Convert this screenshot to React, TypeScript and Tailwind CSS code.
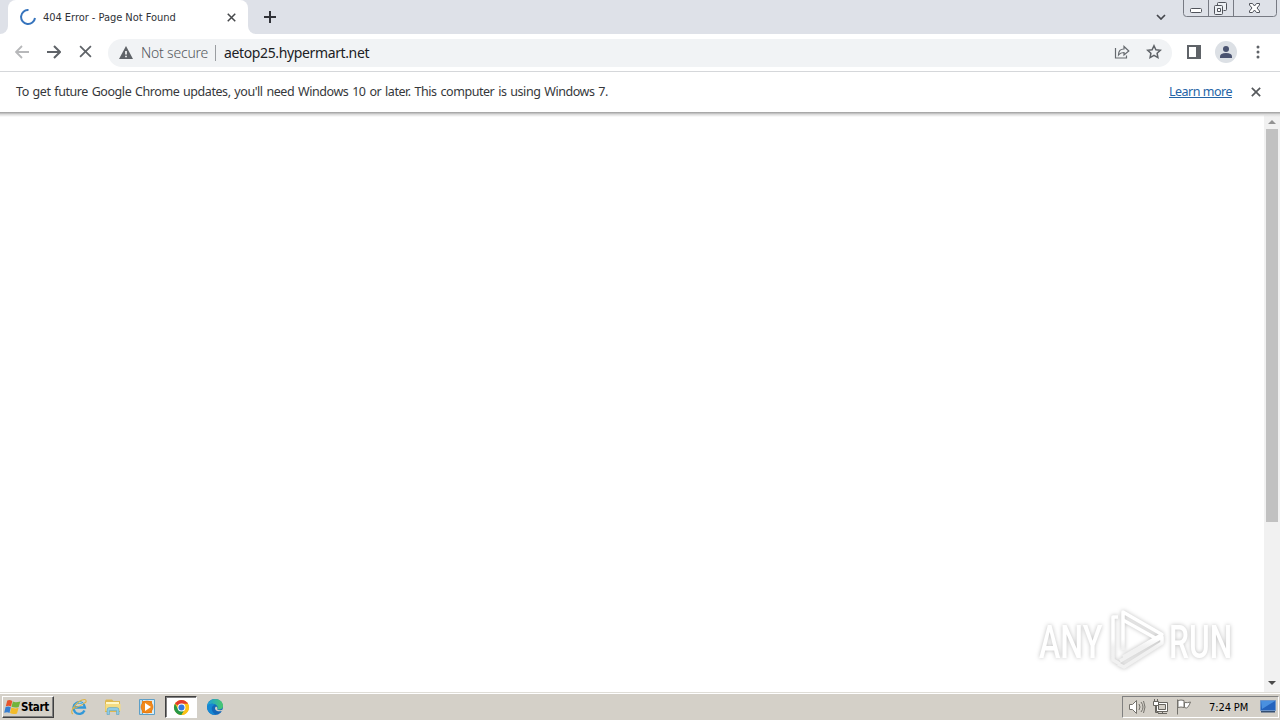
import type { ReactNode } from "react";

const quickLaunch: { id: string; icon: ReactNode; active?: boolean }[] = [
  { id: "ie", icon: <ExplorerIcon /> },
  { id: "files", icon: <FolderIcon /> },
  { id: "player", icon: <PlayerIcon /> },
  { id: "chrome", icon: <ChromeIcon />, active: true },
  { id: "edge", icon: <EdgeIcon /> },
];

function CloseIcon({ className }: { className: string }) {
  return (
    <svg viewBox="0 0 12 12" className={className} fill="none" stroke="currentColor">
      <path d="M1 1l10 10M11 1L1 11" />
    </svg>
  );
}

function ExplorerIcon() {
  return (
    <svg viewBox="0 0 18 18" className="size-[18px]" fill="none">
      <path d="M14.500 12.500A5.800 5.800 0 1 1 15 9.500H5" stroke="#3298d8" strokeWidth="2.300" />
      <path d="M5 7A5 5 0 0 1 13 6" stroke="#9edcf5" strokeWidth="1" />
      <path d="M3 16C-1 15 5 5 12 2c4-1.500 5 .5 3.500 3M2 11C5 10 12 8 15.500 4" stroke="#ddb344" strokeWidth="1.100" />
    </svg>
  );
}

function FolderIcon() {
  return (
    <svg viewBox="0 0 18 18" className="size-[18px]">
      <path d="M1 3l1-1.500h6L9.500 3H16v11H1z" fill="#dfb951" />
      <path d="M2 4h13v3H2z" fill="#fff7c7" />
      <path d="M1.500 6h15v7h-15z" fill="#f4dc83" />
      <path d="M3 16.500V12q0-2.500 2.500-2.500h7q2.500 0 2.500 2.500v4.500h-2.500v-4h-7v4z" fill="#8fcbe4" stroke="#4e9bbf" strokeWidth=".5" />
    </svg>
  );
}

function PlayerIcon() {
  return (
    <svg viewBox="0 0 18 18" className="size-[18px]">
      <path d="M1.500 1.500h12v15h-12z" fill="#b9dced" stroke="#5d9fc7" />
      <path d="M4.500 1.500h12v15h-12z" fill="#d8edf6" stroke="#5d9fc7" />
      <path d="M4 3h10v12H4z" fill="#f28a1b" />
      <circle cx="9" cy="9" r="6" fill="#f28a1b" stroke="#d66c10" strokeWidth=".6" />
      <path d="M7 5v8l6-4z" fill="#fff" />
    </svg>
  );
}

function ChromeIcon() {
  return (
    <svg viewBox="0 0 18 18" className="size-[17px]">
      <circle cx="9" cy="9" r="8" fill="#fbc116" />
      <path d="M9 9L2.100 5A8 8 0 0 1 15.900 5z" fill="#e33b2e" />
      <path d="M2.100 5A8 8 0 0 0 9 17l3.500-6H5.600z" fill="#279847" />
      <path d="M9 5h6.900A8 8 0 0 1 9 17l3.500-6z" fill="#fbc116" />
      <circle cx="9" cy="9" r="4.200" fill="#fff" />
      <circle cx="9" cy="9" r="3.200" fill="#3478df" />
    </svg>
  );
}

function EdgeIcon() {
  return (
    <svg viewBox="0 0 18 18" className="size-[18px]">
      <defs>
        <linearGradient id="edgeTop" x1="0" x2="1">
          <stop stopColor="#1a9ee0" />
          <stop offset="1" stopColor="#4ac96b" />
        </linearGradient>
      </defs>
      <circle cx="9" cy="9" r="8" fill="#1367b8" />
      <path d="M1 8.500C1.500 4 5 1 9 1c5 0 8 3 8 7 0 3-3 4-6 3 .8-.8.9-2 .2-3C9 5 3.500 5 1 8.500z" fill="url(#edgeTop)" />
      <path d="M10 8.500c-2.500 2 0 6 5.700 4.500L18 12v-1c-2 1.500-5 1.500-7 .2.700-.7.500-2-1-2.700z" fill="#d4d0c8" />
      <path d="M1 9c1-4 6-4 8-2-5 1-4 7 1 10-5 0-9-3-9-8z" fill="#1688d3" />
    </svg>
  );
}

function WindowsFlag() {
  return (
    <svg viewBox="0 0 17 16" className="h-4 w-[17px] shrink-0">
      <path d="M3.300 1.500C5 .5 6.500 1 8.300 2L7 7.500C5.200 6.500 4 6.500 1.800 7.300z" fill="#e7542b" />
      <path d="M8.900 2.500c2 1.300 4.500.8 7.500 0L14.700 8c-2 .9-5 .8-7.200-.2z" fill="#71b43b" />
      <path d="M1.600 8.100c2-.9 3.500-.8 5.200.2L5.500 14C4 13 2.500 13 .2 13.800z" fill="#367ed1" />
      <path d="M7.400 8.600c2 1 5 1 7.200.2L13 14.500c-2.500.9-5 .7-7-.5z" fill="#f3bb29" />
    </svg>
  );
}

function TabStrip() {
  return (
    <div className="flex h-[34px] items-start bg-[#dee1e8]">
      <div className="flex h-[34px] w-2 items-end bg-white">
        <div className="h-full w-full rounded-br-lg bg-[#dee1e8]" />
      </div>
      <div className="bg-[#dee1e8]">
        <div className="flex h-[34px] w-60 items-center rounded-t-lg bg-white pl-3">
          <svg viewBox="0 0 16 16" className="size-4 shrink-0" fill="none" stroke="#3674bd" strokeWidth="2">
            <path d="M8.500 1A7 7 0 1 0 15 9" />
          </svg>
          <span className="ml-[7px] w-[184px] whitespace-nowrap pt-0.5 font-['DejaVu_Sans_Condensed','DejaVu_Sans',sans-serif] text-[11px] tracking-[-0.040px] text-[#303238]">
            404 Error - Page Not Found
          </span>
          <CloseIcon className="size-[9px] shrink-0 stroke-[2] text-[#45474a]" />
        </div>
      </div>
      <div className="h-[34px] w-2 bg-white">
        <div className="h-full rounded-bl-lg bg-[#dee1e8]" />
      </div>
      <svg viewBox="0 0 12 12" className="ml-2 mt-[11px] size-3" stroke="#303238" strokeWidth="2">
        <path d="M6 0v12M0 6h12" />
      </svg>
      <svg viewBox="0 0 10 6" className="ml-auto mr-[17px] mt-[14px] h-1.5 w-2.5" fill="none" stroke="#45474d" strokeWidth="1.700">
        <path d="M1 1l4 4 4-4" />
      </svg>
      <svg viewBox="0 0 94 17" className="mr-[3px] h-[17px] w-[94px]" fill="none" stroke="#777a83">
        <path d="M.5 0v13.500q0 3 3 3h87q3 0 3-3V0M25.500 0v16M50.500 0v16" />
        <rect x="7.500" y="8.500" width="11" height="4" rx="1" fill="#fff" stroke="#50535b" />
        <g stroke="#50535b">
          <path d="M34.500 5V3.500q0-1 1-1h7q1 0 1 1v6q0 1-1 1h-2" fill="#edf0f4" />
          <rect x="31.500" y="5.500" width="8" height="9" rx="1" fill="#edf0f4" />
          <path d="M34.500 8.500h3v3h-3z" fill="#fff" />
          <path d="M66.500 3.500h3l2 2.500 2-2.500h3v1.500L74 8l2.500 3v1.500h-3l-2-2.500-2 2.500h-3V11L69 8l-2.500-3z" fill="#fff" />
        </g>
      </svg>
    </div>
  );
}

function Toolbar() {
  return (
    <div className="flex h-[38px] items-center border-b border-[#d5d7da] bg-white pl-[15px] text-[#5f6368]">
      <svg viewBox="0 0 14 14" className="mb-0.5 size-[14px] text-[#b7b8ba]" fill="none" stroke="currentColor" strokeWidth="1.800">
        <path d="M14 7H1M7 1L1 7l6 6" />
      </svg>
      <svg viewBox="0 0 14 14" className="mb-0.5 ml-[18px] size-[14px]" fill="none" stroke="currentColor" strokeWidth="2">
        <path d="M0 7h13M7 1l6 6-6 6" />
      </svg>
      <CloseIcon className="mb-0.5 ml-[18px] size-[13px] stroke-[1.6]" />
      <div className="ml-4 flex h-7 w-[1064px] items-center rounded-full bg-[#f1f3f5] pl-[11px]">
        <svg viewBox="0 0 14 13" className="mb-px h-[13px] w-[14px]">
          <path d="M7 0l7 13H0z" fill="#5f6368" />
          <path d="M6.200 5h1.600v3.500H6.200zM6.200 9.700h1.600v1.500H6.200z" fill="#fff" />
        </svg>
        <span className="ml-2 w-[75px] whitespace-nowrap border-r border-[#9a9da1] font-['Noto_Sans',sans-serif] text-[14px] leading-4 font-light tracking-[-0.200px] text-[#55585d]">
          Not secure
        </span>
        <span className="ml-2 whitespace-nowrap font-['Noto_Sans',sans-serif] text-[14px] leading-4 tracking-[-0.370px] text-[#202124]">
          aetop25.hypermart.net
        </span>
        <svg viewBox="0 0 16 14" className="mb-0.5 ml-auto h-[14px] w-4" fill="none" stroke="#666a6f" strokeWidth="1.200">
          <path d="M1.500 3v10h11V10.500M4.500 10c0-4 2-6 5.500-6V1.500L14.800 6 10 10V7.500c-2.500 0-4 .5-5.500 2.500z" />
        </svg>
        <svg viewBox="0 0 16 16" className="mb-0.5 ml-4 mr-2.5 size-4" fill="none" stroke="#5f6368" strokeWidth="1.500">
          <path d="M8 1.700l1.900 4 4.400.5-3.200 3 .8 4.400L8 11.400l-3.900 2.200.8-4.400-3.200-3 4.400-.5z" />
        </svg>
      </div>
      <svg viewBox="0 0 14 14" className="mb-0.5 ml-[15px] size-[14px]">
        <path fill="#5f6368" fillRule="evenodd" d="M0 0h14v14H0zM2 2v10h7V2z" />
      </svg>
      <svg viewBox="0 0 22 22" className="mb-0.5 ml-[14px] size-[22px]">
        <circle cx="11" cy="11" r="11" fill="#dce0e5" />
        <circle cx="11" cy="8" r="3" fill="#4a5370" />
        <path d="M5 17v-1.500q0-3.500 6-3.500t6 3.500V17z" fill="#4a5370" />
      </svg>
      <svg viewBox="0 0 4 14" className="mb-0.5 ml-[19px] h-[14px] w-1" fill="#5f6368">
        <circle cx="2" cy="2" r="1.500" />
        <circle cx="2" cy="7" r="1.500" />
        <circle cx="2" cy="12" r="1.500" />
      </svg>
    </div>
  );
}

function UpdateBar() {
  return (
    <div className="flex h-[41px] items-center bg-white pl-4 font-['Noto_Sans',sans-serif] text-[12.500px] leading-4">
      <span className="whitespace-nowrap pb-px tracking-[-0.440px] text-[#36383b] [word-spacing:1px]">
        To get future Google Chrome updates, you'll need Windows 10 or later. This computer is using Windows 7.
      </span>
      <a className="mb-px ml-auto w-[63px] whitespace-nowrap tracking-[-0.500px] text-[#2464a6] underline">Learn more</a>
      <CloseIcon className="mb-px ml-[19px] mr-[19px] size-[10px] stroke-[2] text-[#56595c]" />
    </div>
  );
}

// Pale logo in the lower right corner of the page
function Watermark() {
  return (
    <svg
      viewBox="0 0 210 64"
      className="absolute bottom-[19px] right-[32px] h-16 w-[210px] overflow-visible drop-shadow-[0_0_2px_rgba(0,0,0,0.26)]"
      fill="none"
      stroke="url(#markFill)"
    >
      <defs>
        <linearGradient id="markFill" gradientUnits="userSpaceOnUse" x1="0" y1="30" x2="0" y2="38">
          <stop stopColor="#ffffff" />
          <stop offset="1" stopColor="#f1f1f1" />
        </linearGradient>
      </defs>
      <g fill="url(#markFill)" stroke="none" fontFamily="Roboto, sans-serif" fontSize="46" fontWeight="500">
        <text transform="translate(1 49) scale(.7 1)">ANY</text>
        <text transform="translate(131 49) scale(.69 1)">RUN</text>
      </g>
      <g strokeWidth="3.500" strokeLinejoin="round">
        <path d="M85 41V3l39 22.500L85 48M80 8h-5v43l7 4" />
        <path d="M85 11l34 19M82 52l42-24v6L86 58l-6-3" />
      </g>
    </svg>
  );
}

function PageView() {
  return (
    <div className="relative flex h-[579px] justify-end bg-white">
      <div className="flex w-4 flex-col items-center bg-[#f1f1f1]">
        <svg viewBox="0 0 16 16" className="size-4" fill="#929292">
          <path d="M4 11h8L8 7z" />
        </svg>
        <div className="h-[393px] w-3 bg-[#c1c1c1]" />
        <svg viewBox="0 0 16 17" className="mt-auto h-[17px] w-4" fill="#4b4b4b">
          <path d="M4 6h8l-4 4z" />
        </svg>
      </div>
      <div className="absolute inset-x-0 -top-px h-[5px] bg-linear-to-b from-[#9c9c9c] via-[#dcdcdc] to-transparent" />
      <Watermark />
    </div>
  );
}

function Taskbar() {
  return (
    <div className="flex h-7 items-start border-t border-[#dfddd7] bg-[#d4d0c8] shadow-[inset_0_1px_white]">
      <button className="ml-0.5 mt-[3px] flex h-[22px] w-[52px] items-center border border-t-white border-r-[#404040] border-b-[#404040] border-l-white pl-px shadow-[inset_-1px_-1px_#808080] font-['DejaVu_Sans_Condensed','DejaVu_Sans',sans-serif] text-[11.500px] font-bold tracking-[-0.280px] text-black">
        <WindowsFlag />
        <span className="pt-0.5">Start</span>
      </button>
      <div className="ml-2 mt-[3px] flex">
        {quickLaunch.map((item) => (
          <div
            key={item.id}
            className={
              item.active
                ? "mx-px flex h-[22px] w-8 items-center justify-center border border-t-[#404040] border-r-white border-b-white border-l-[#404040] bg-white shadow-[inset_1px_1px_#808080]"
                : "flex h-[22px] w-[34px] items-center justify-center"
            }
          >
            {item.icon}
          </div>
        ))}
      </div>
      <div className="ml-auto mr-px mt-[3px] flex h-[22px] w-[157px] items-center border border-t-[#808080] border-r-white border-b-white border-l-[#808080] pl-[5px]">
        <svg viewBox="0 0 18 16" className="h-4 w-[18px]" fill="none" stroke="#74726c">
          <path d="M1.500 5.500h3l4-4v13l-4-4h-3z" fill="#fff" />
          <path d="M11 5q2 3 0 6M13 3q4 5 0 10M15.500 2q3 6 0 12" />
        </svg>
        <svg viewBox="0 0 17 16" className="ml-[6px] h-4 w-[17px]" fill="none" stroke="#67655f">
          <path d="M4.500 3.500h11v9h-11z" fill="#fff" />
          <path d="M6.500 5.500h7v5h-7z" fill="#d4d0c8" />
          <path d="M10.500 13v1.500M6 14.500h9" />
          <path d="M1.500 2.500h5v4h-5zM2.500 0v2.500M5.500 0v2.500" fill="#fff" />
          <path d="M3.500 7v6.500h3" />
        </svg>
        <svg viewBox="0 0 16 16" className="ml-[7px] size-4" fill="#fff" stroke="#74726c">
          <path d="M1.500 .5v15M2 1.500q3-1 6 0v7q-3-1-6 0zM8.500 3.500q3 .5 6-.5-1 3-3 5.500-1 1-3 0z" />
        </svg>
        <span className="ml-[17px] w-[41px] whitespace-nowrap pt-0.5 font-['DejaVu_Sans_Condensed','DejaVu_Sans',sans-serif] text-[11px] tracking-[-0.100px] text-black">
          7:24 PM
        </span>
        <svg viewBox="0 0 16 14" className="ml-auto mr-[2px] h-[14px] w-4 shrink-0">
          <path d="M.5 .5h15v10H.5z" fill="#2463bd" stroke="#6d95c9" />
          <path d="M1 1h14L2 9z" fill="#4a90df" />
          <path d="M1 11h14v1.500H1z" fill="#344f72" />
        </svg>
      </div>
    </div>
  );
}

export default function App() {
  return (
    <div className="h-[720px] w-[1280px] overflow-hidden bg-white">
      <TabStrip />
      <Toolbar />
      <UpdateBar />
      <PageView />
      <Taskbar />
    </div>
  );
}
